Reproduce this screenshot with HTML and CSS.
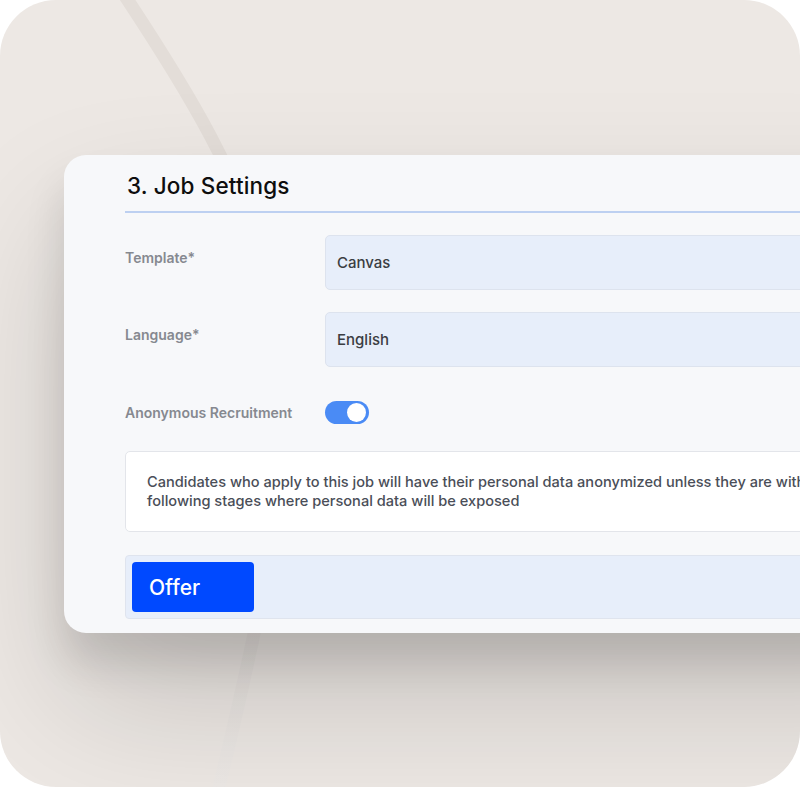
FILE: index.html
```html
<!DOCTYPE html>
<html lang="en">
<head>
<meta charset="utf-8">
<title>Job Settings</title>
<link rel="stylesheet" href="styles.css">
</head>
<body>
<div class="frame">
  <svg class="arc" width="800" height="787" viewBox="0 0 800 787" aria-hidden="true">
    <defs>
      <linearGradient id="arcTone" x1="0" y1="0" x2="0" y2="787" gradientUnits="userSpaceOnUse">
        <stop offset="0" stop-color="#e3ddd8"/>
        <stop offset="0.6" stop-color="#e3ddd8"/>
        <stop offset="1" stop-color="#ece8e5"/>
      </linearGradient>
    </defs>
    <path d="M125,-4 C170,64 260,200 268,300 C274,360 282,400 282,420 C282,520 252,650 216,800" fill="none" stroke="url(#arcTone)" stroke-width="13"/>
  </svg>

  <section class="card">
    <h2 class="card-title">3. Job Settings</h2>

    <div class="form">
      <label class="field-label">Template*</label>
      <div class="input">Canvas</div>

      <label class="field-label">Language*</label>
      <div class="input">English</div>

      <label class="field-label field-label--center">Anonymous Recruitment</label>
      <div class="toggle-wrap"><span class="toggle"><span class="knob"></span></span></div>
    </div>

    <div class="notice">
      Candidates who apply to this job will have their personal data anonymized unless they are within the<br>following stages where personal data will be exposed
    </div>

    <div class="stages">
      <span class="stage">Offer</span>
    </div>
  </section>
</div>
</body>
</html>
```

FILE: styles.css
```css
html, body {
  margin: 0;
  padding: 0;
  background: #ffffff;
}

body {
  font-family: "Inter", "Liberation Sans", sans-serif;
}

.frame {
  position: relative;
  width: 800px;
  height: 787px;
  border-radius: 56px;
  overflow: hidden;
  background: #ede8e4;
  padding-top: 155px;
  padding-left: 64px;
  box-sizing: border-box;
}

.arc {
  position: absolute;
  left: 0;
  top: 0;
}

.card {
  position: relative;
  width: 900px;
  box-sizing: border-box;
  background: #f7f8fa;
  border-radius: 22px;
  padding: 14px 0 14px 61px;
  box-shadow:
    0 30px 40px rgba(0, 0, 0, 0.12),
    0 70px 140px rgba(0, 0, 0, 0.16);
}

.card-title {
  margin: 0 0 0 2px;
  font-size: 22.5px;
  font-weight: 500;
  color: #0e0e0e;
  line-height: 34px;
  letter-spacing: 0.15px;
}

.card-title + .form {
  border-top: 2px solid #bdd0f1;
  margin-top: 8px;
}

.form {
  display: grid;
  grid-template-columns: 200px 1fr;
  row-gap: 22px;
  padding-top: 22px;
}

.field-label {
  font-size: 14px;
  font-weight: 600;
  color: #868990;
  padding-top: 14px;
  letter-spacing: 0;
}

.field-label--center {
  padding-top: 0;
  align-self: center;
  margin-top: 12px;
}

.input {
  height: 55px;
  box-sizing: border-box;
  background: #e7eefa;
  border: 1px solid #dde3ee;
  border-radius: 5px;
  display: flex;
  align-items: center;
  padding-left: 11px;
  font-size: 15px;
  font-weight: 500;
  color: #3b3d42;
}

.toggle-wrap {
  display: flex;
  align-items: center;
  margin-top: 12px;
}

.toggle {
  width: 44px;
  height: 23px;
  border-radius: 12px;
  background: #4a8bf5;
  display: flex;
  align-items: center;
  justify-content: flex-end;
  padding-right: 3px;
  box-sizing: border-box;
}

.knob {
  width: 19px;
  height: 19px;
  border-radius: 50%;
  background: #ffffff;
}

.notice {
  margin-top: 27px;
  background: #ffffff;
  border: 1px solid #e3e5ea;
  border-radius: 5px;
  height: 81px;
  box-sizing: border-box;
  padding: 21px 0 0 21px;
  font-size: 14.6px;
  font-weight: 500;
  line-height: 19px;
  color: #4a4e58;
  white-space: nowrap;
}

.stages {
  margin-top: 23px;
  background: #e7eefa;
  border: 1px solid #dfe4ee;
  border-radius: 4px;
  padding: 6px;
  display: flex;
}

.stage {
  width: 122px;
  height: 50px;
  box-sizing: border-box;
  background: #0049ff;
  border-radius: 4px;
  color: #ffffff;
  font-size: 21px;
  font-weight: 500;
  display: flex;
  align-items: center;
  padding-left: 17px;
}
```
